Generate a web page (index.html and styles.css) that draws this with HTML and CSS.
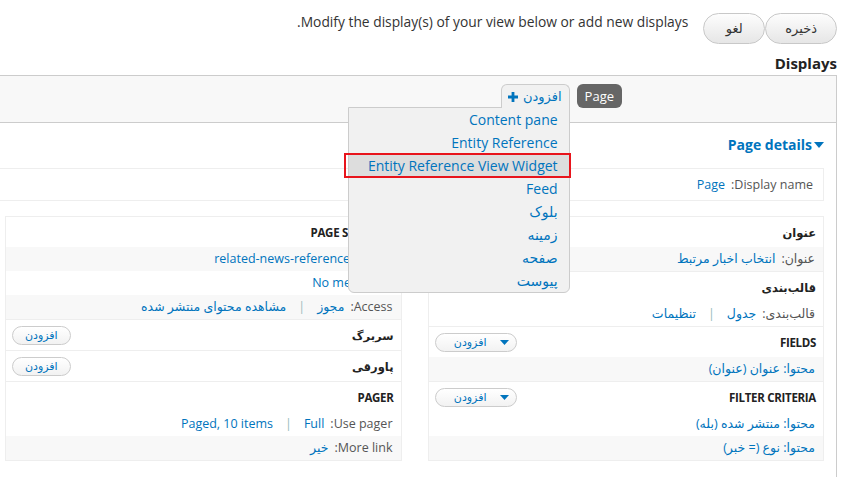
FILE: index.html
```html
<!doctype html>
<html lang="fa" dir="rtl">
 <head>
  <meta charset="UTF-8">
  <title>Views - Displays</title>
  <link rel="stylesheet" href="styles.css">
 </head>
 <body>
  <div class="page">
	<div class="topbar">
		<div class="actions">
			<button class="btn">ذخیره</button>
			<button class="btn">لغو</button>
		</div>
		<p class="intro">Modify the display(s) of your view below or add new displays.</p>
	</div>

	<h2 class="displays-title">Displays</h2>

	<div class="displays">
		<div class="tabs">
			<span class="tab-page">Page</span>
			<div class="tab-wrap">
				<span class="tab-add">افزودن
					<svg width="10" height="10" viewBox="0 0 10 10"><path d="M3.6 0h2.8v3.6H10v2.8H6.4V10H3.6V6.4H0V3.6h3.6z" fill="#0074bd"/></svg>
				</span>
				<ul class="add-menu">
					<li>Content pane</li>
					<li>Entity Reference</li>
					<li class="hover">Entity Reference View Widget</li>
					<li>Feed</li>
					<li>بلوک</li>
					<li>زمینه</li>
					<li>صفحه</li>
					<li>پیوست</li>
				</ul>
			</div>
		</div>

		<div class="details">
			<h3 class="details-title">
				<svg width="10" height="6" viewBox="0 0 10 6"><path d="M0 0h10L5 6z" fill="#0074bd"/></svg>
				<span>Page details</span>
			</h3>

			<div class="display-name">
				<span class="label">Display name:</span>
				<a>Page</a>
			</div>

			<div class="columns">
				<!-- ستون راست -->
				<div class="col">
					<div class="section">
						<div class="sec-head">عنوان</div>
						<div class="item alt"><span class="label">عنوان:</span><a>انتخاب اخبار مرتبط</a></div>
					</div>
					<div class="section">
						<div class="sec-head">قالب‌بندی</div>
						<div class="item"><span class="label">قالب‌بندی:</span><a>جدول</a><span class="sep">|</span><a>تنظیمات</a></div>
					</div>
					<div class="section">
						<div class="sec-head">FIELDS
							<span class="add-btn drop"><svg width="9" height="5" viewBox="0 0 9 5"><path d="M0 0h9L4.5 5z" fill="#0074bd"/></svg>افزودن</span>
						</div>
						<div class="item alt"><a>محتوا: عنوان (عنوان)</a></div>
					</div>
					<div class="section">
						<div class="sec-head">FILTER CRITERIA
							<span class="add-btn drop"><svg width="9" height="5" viewBox="0 0 9 5"><path d="M0 0h9L4.5 5z" fill="#0074bd"/></svg>افزودن</span>
						</div>
						<div class="item"><a>محتوا: منتشر شده (بله)</a></div>
						<div class="item alt"><a>محتوا: نوع (= خبر)</a></div>
					</div>
				</div>

				<!-- ستون چپ -->
				<div class="col">
					<div class="section">
						<div class="sec-head">PAGE SETTINGS</div>
						<div class="item alt"><span class="label">مسیر:</span><a>/related-news-reference</a></div>
						<div class="item"><span class="label">منو:</span><a>No menu</a></div>
						<div class="item alt"><span class="label">Access:</span><a>مجوز</a><span class="sep">|</span><a>مشاهده محتوای منتشر شده</a></div>
					</div>
					<div class="section">
						<div class="sec-head">سربرگ <span class="add-btn">افزودن</span></div>
					</div>
					<div class="section">
						<div class="sec-head">پاورقی <span class="add-btn">افزودن</span></div>
					</div>
					<div class="section">
						<div class="sec-head">PAGER</div>
						<div class="item"><span class="label">Use pager:</span><a>Full</a><span class="sep">|</span><a>Paged, 10 items</a></div>
						<div class="item alt"><span class="label">More link:</span><a>خیر</a></div>
					</div>
				</div>
			</div>
		</div>
	</div>
  </div>
 </body>
</html>
```
FILE: styles.css
```css
*{
	margin:0;
	padding:0;
	box-sizing:border-box;
}

html,body{
	overflow:hidden;
}

body{
	background:#fff;
	color:#333;
	font-family:"Open Sans","DejaVu Sans",sans-serif;
	font-size:13px;
}

a{
	color:#0074bd;
}

.page{
	margin-right:12px;
}

/* بالای صفحه */
.topbar{
	display:flex;
	align-items:flex-start;
	padding-top:13px;
}

.actions{
	display:flex;
}

.btn{
	min-width:62px;
	height:31px;
	padding:0 19px;
	border:1px solid #c8c8c8;
	border-radius:16px;
	background:linear-gradient(#fdfdfd,#e6e6e6);
	color:#333;
	font-family:"DejaVu Sans",sans-serif;
	font-size:13px;
}

.intro{
	margin-right:15px;
	font-size:13.8px;
	line-height:18px;
}

.displays-title{
	margin-top:9px;
	margin-bottom:2px;
	font-size:15px;
	line-height:20px;
	color:#222;
}

/* جعبه نمایش‌ها */
.displays{
	border:1px solid #ccc;
	border-left:none;
}

.tabs{
	display:flex;
	gap:7px;
	padding:8px 214px 14px 0;
	background:#f8f8f8;
	border-bottom:1px solid #ccc;
}

.tab-page{
	height:24px;
	padding:0 8px;
	line-height:24px;
	background:#666;
	color:#fff;
	border-radius:6px;
}

.tab-wrap{
	position:relative;
}

.tab-add{
	position:relative;
	z-index:3;
	display:flex;
	align-items:center;
	gap:5px;
	height:24px;
	padding:0 7px 0 6px;
	background:#f1f1f1;
	border:1px solid #ccc;
	border-bottom:none;
	border-radius:6px 6px 0 0;
	color:#0074bd;
	font-family:"DejaVu Sans",sans-serif;
	font-size:13px;
}

.add-menu{
	position:absolute;
	z-index:2;
	top:23px;
	right:0;
	width:222px;
	padding:0;
	list-style:none;
	background:#f1f1f1;
	border:1px solid #ccc;
	border-radius:0 0 6px 6px;
}

.add-menu li{
	height:23px;
	line-height:23px;
	padding-right:11px;
	color:#0074bd;
	font-size:14px;
	white-space:nowrap;
}

.add-menu li.hover{
	position:relative;
	background:#ddd;
}

.add-menu li.hover::after{
	content:"";
	position:absolute;
	left:-5px;
	right:-2px;
	top:-1px;
	bottom:-1px;
	border:2px solid #e8141c;
}

/* جزئیات */
.details{
	padding-right:12px;
	padding-bottom:30px;
}

.details-title{
	display:flex;
	align-items:center;
	gap:2px;
	margin-top:12px;
	font-size:14px;
	line-height:20px;
	color:#0074bd;
}

.display-name{
	display:flex;
	gap:6px;
	margin-top:13px;
	height:33px;
	padding:0 10px;
	align-items:center;
	border:1px solid #eee;
	border-left:none;
	font-size:12.5px;
}

.label{
	color:#555;
}

.columns{
	display:grid;
	grid-template-columns:1fr 1fr;
	gap:26px;
	margin-top:15px;
	margin-left:5px;
}

.col{
	border:1px solid #eee;
	border-bottom:none;
}

.section{
	border-bottom:1px solid #eee;
}

.sec-head{
	display:flex;
	justify-content:space-between;
	align-items:center;
	height:30px;
	padding:0 7px 0 6px;
	font-weight:bold;
	font-size:11.5px;
	letter-spacing:-0.3px;
	color:#222;
}

.item{
	display:flex;
	gap:6px;
	height:24px;
	line-height:24px;
	padding:0 8px;
	font-size:12.5px;
	white-space:nowrap;
	overflow:hidden;
}

.item.alt{
	background:#f8f8f8;
}

.sep{
	color:#9bb;
	margin:0 6px;
}

.add-btn{
	display:flex;
	align-items:center;
	height:19px;
	padding:0 12px;
	border:1px solid #ccc;
	border-radius:10px;
	background:linear-gradient(#fff,#f2f2f2);
	color:#0074bd;
	font-weight:normal;
	font-size:11px;
	letter-spacing:0;
	font-family:"DejaVu Sans",sans-serif;
}

.add-btn.drop{
	width:82px;
	gap:13px;
	padding:0 7px 0 0;
}
```
